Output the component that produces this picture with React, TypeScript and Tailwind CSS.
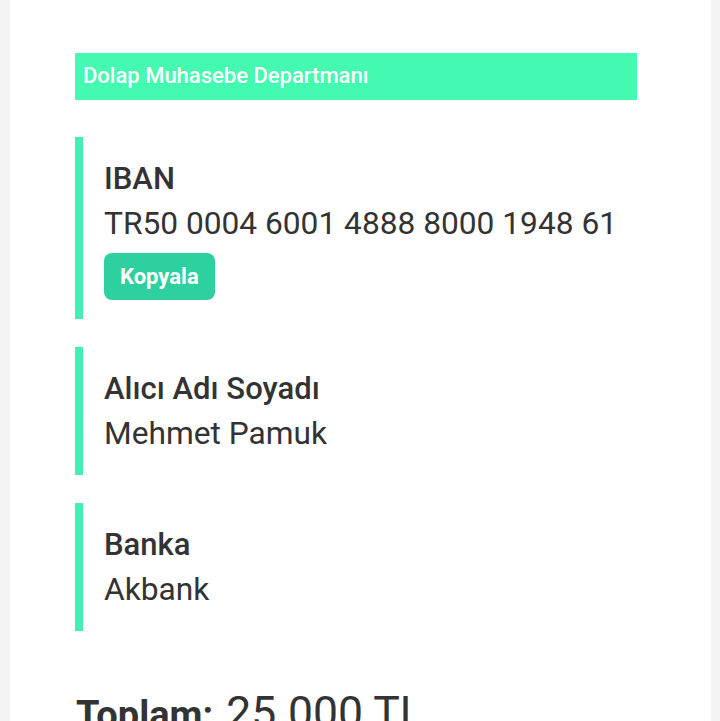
import React from 'react';

const fields = [
  { label: 'IBAN', value: 'TR50 0004 6001 4888 8000 1948 61', copy: true },
  { label: 'Alıcı Adı Soyadı', value: 'Mehmet Pamuk' },
  { label: 'Banka', value: 'Akbank' },
];

export default function App() {
  return (
    <div
      className="h-[721px] overflow-hidden bg-[#f4f4f4] px-[10px] text-[#333333]"
      style={{ fontFamily: 'Roboto, "Noto Sans", sans-serif' }}
    >
      <div className="h-full w-[701px] bg-white pl-[65px] pt-[53px]">
        <div className="flex h-[47px] w-[562px] items-center bg-[#44f9b0] px-2 pb-[3px] text-[22px] font-medium text-white">
          Dolap Muhasebe Departmanı
        </div>

        <div className="mt-[37px] flex flex-col gap-[28px]">
          {fields.map((f) => (
            <div key={f.label} className="border-l-[8px] border-[#44eeb0] py-[19px] pl-[21px]">
              <div className="text-[31px] font-medium leading-[45px]">{f.label}</div>
              <div className="text-[31.7px] leading-[45px]">{f.value}</div>
              {f.copy && (
                <button className="mt-[7px] h-[47px] rounded-lg bg-[#2fd0a0] px-[16px] text-[22px] font-bold text-white">
                  Kopyala
                </button>
              )}
            </div>
          ))}
        </div>

        <div className="mt-[49px] flex items-baseline gap-[13px] pl-[1px]">
          <span className="text-[38px] font-bold">Toplam:</span>
          <span className="text-[44.5px]">25.000 TL</span>
        </div>
      </div>
    </div>
  );
}
